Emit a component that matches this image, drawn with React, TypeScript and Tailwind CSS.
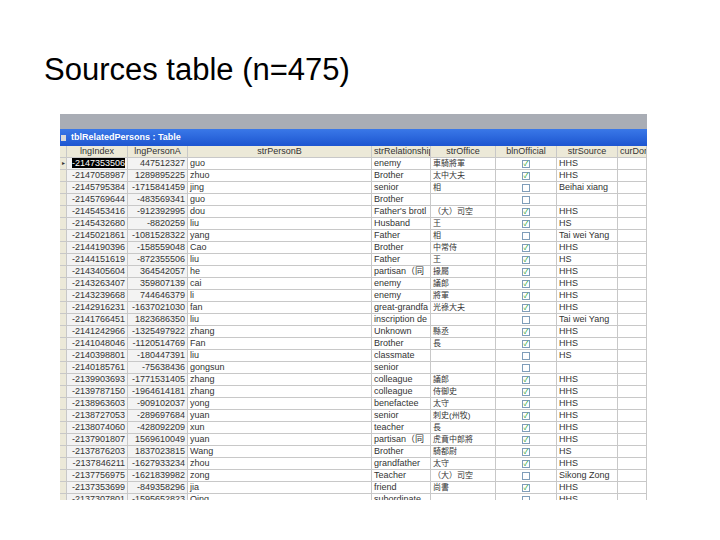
const rows: [string,string,string,string,string,boolean,string][] = [
["-2147353506","447512327","guo","enemy","車騎將軍",true,"HHS"],
["-2147058987","1289895225","zhuo","Brother","太中大夫",true,"HHS"],
["-2145795384","-1715841459","jing","senior","相",false,"Beihai xiang"],
["-2145769644","-483569341","guo","Brother","",false,""],
["-2145453416","-912392995","dou","Father's brotl","（大）司空",true,"HHS"],
["-2145432680","-8820259","liu","Husband","王",true,"HS"],
["-2145021861","-1081528322","yang","Father","相",false,"Tai wei Yang"],
["-2144190396","-158559048","Cao","Brother","中常侍",true,"HHS"],
["-2144151619","-872355506","liu","Father","王",true,"HS"],
["-2143405604","364542057","he","partisan（同","掾屬",true,"HHS"],
["-2143263407","359807139","cai","enemy","議郎",true,"HHS"],
["-2143239668","744646379","li","enemy","將軍",true,"HHS"],
["-2142916231","-1637021030","fan","great-grandfa","光祿大夫",true,"HHS"],
["-2141766451","1823686350","liu","inscription de","",false,"Tai wei Yang"],
["-2141242966","-1325497922","zhang","Unknown","縣丞",true,"HHS"],
["-2141048046","-1120514769","Fan","Brother","長",true,"HHS"],
["-2140398801","-180447391","liu","classmate","",false,"HS"],
["-2140185761","-75638436","gongsun","senior","",false,""],
["-2139903693","-1771531405","zhang","colleague","議郎",true,"HHS"],
["-2139787150","-1964614181","zhang","colleague","侍御史",true,"HHS"],
["-2138963603","-909102037","yong","benefactee","太守",true,"HHS"],
["-2138727053","-289697684","yuan","senior","刺史(州牧)",true,"HHS"],
["-2138074060","-428092209","xun","teacher","長",true,"HHS"],
["-2137901807","1569610049","yuan","partisan（同","虎賁中郎將",true,"HHS"],
["-2137876203","1837023815","Wang","Brother","騎都尉",true,"HS"],
["-2137846211","-1627933234","zhou","grandfather","太守",true,"HHS"],
["-2137756975","-1621839982","zong","Teacher","（大）司空",false,"Sikong Zong"],
["-2137353699","-849358296","jia","friend","尚書",true,"HHS"],
["-2137307801","-1595652823","Qing","subordinate","",false,"HHS"],
["-2137058944","1958524548","xun","grandson","令",true,"HHS"],
];
const cols = "grid-cols-[7px_61px_60px_184px_59px_65px_61px_61px_29px]";
const cell = "border-r border-b border-[#c8c8c8] px-[2px] overflow-hidden whitespace-nowrap leading-[11px]";
export default function App(){
  return (
    <div className="w-[720px] h-[540px] bg-white relative overflow-hidden" style={{fontFamily:'"Liberation Sans", Arial, sans-serif'}}>
      <div className="pt-[50px] pl-[44px] text-[31px] text-black leading-[40px]">Sources table (n=475)</div>
      <div className="ml-[60px] mt-[24px] w-[587px] h-[386px] overflow-hidden flex flex-col" style={{fontFamily:'"Liberation Sans", "Noto Sans CJK TC", Arial, sans-serif'}}>
        <div className="h-[15px] shrink-0 bg-[#a9adb5]"></div>
        <div className="h-[17px] shrink-0 bg-gradient-to-b from-[#3a78e8] to-[#1d55d0] flex items-center text-white text-[9px] font-bold pl-[1px]">
          <span className="w-[5px] h-[6px] bg-[#d9d9d9] mr-[5px]"></span>tblRelatedPersons : Table
        </div>
        <div className={`grid shrink-0 ${cols} text-[9px] text-[#333]`}>
          <div className={`${cell} bg-[#ece9d8] border-[#9a9a9a]`}></div>
          {["lngIndex","lngPersonA","strPersonB","strRelationshipT","strOffice","blnOfficial","strSource","curDon"].map(h=>(
            <div key={h} className={`${cell} bg-[#ece9d8] border-[#a0a0a0] text-center h-[12px]`}>{h}</div>
          ))}
          {rows.map((r,i)=>(
            <div key={i} className="contents">
              <div className={`${cell} bg-[#ece9d8] border-[#9a9a9a] h-[11.5px] text-[6px]`}>{i===0?"▸":""}</div>
              <div className={`${cell} text-right bg-[#f3f3f3]`}><span className={i===0?"bg-black text-white":""}>{r[0]}</span></div>
              <div className={`${cell} text-right bg-[#f3f3f3]`}>{r[1]}</div>
              <div className={cell}>{r[2]}</div>
              <div className={cell}>{r[3]}</div>
              <div className={`${cell} text-[8px]`}>{r[4]}</div>
              <div className={`${cell} flex justify-center items-center`}>
                <span className="w-[8px] h-[8px] border border-[#7f9db9] bg-white flex items-center justify-center text-[7px] leading-none text-[#21a121]">{r[5]?"✓":""}</span>
              </div>
              <div className={cell}>{r[6]}</div>
              <div className={cell}></div>
            </div>
          ))}
        </div>
      </div>
    </div>
  );
}
